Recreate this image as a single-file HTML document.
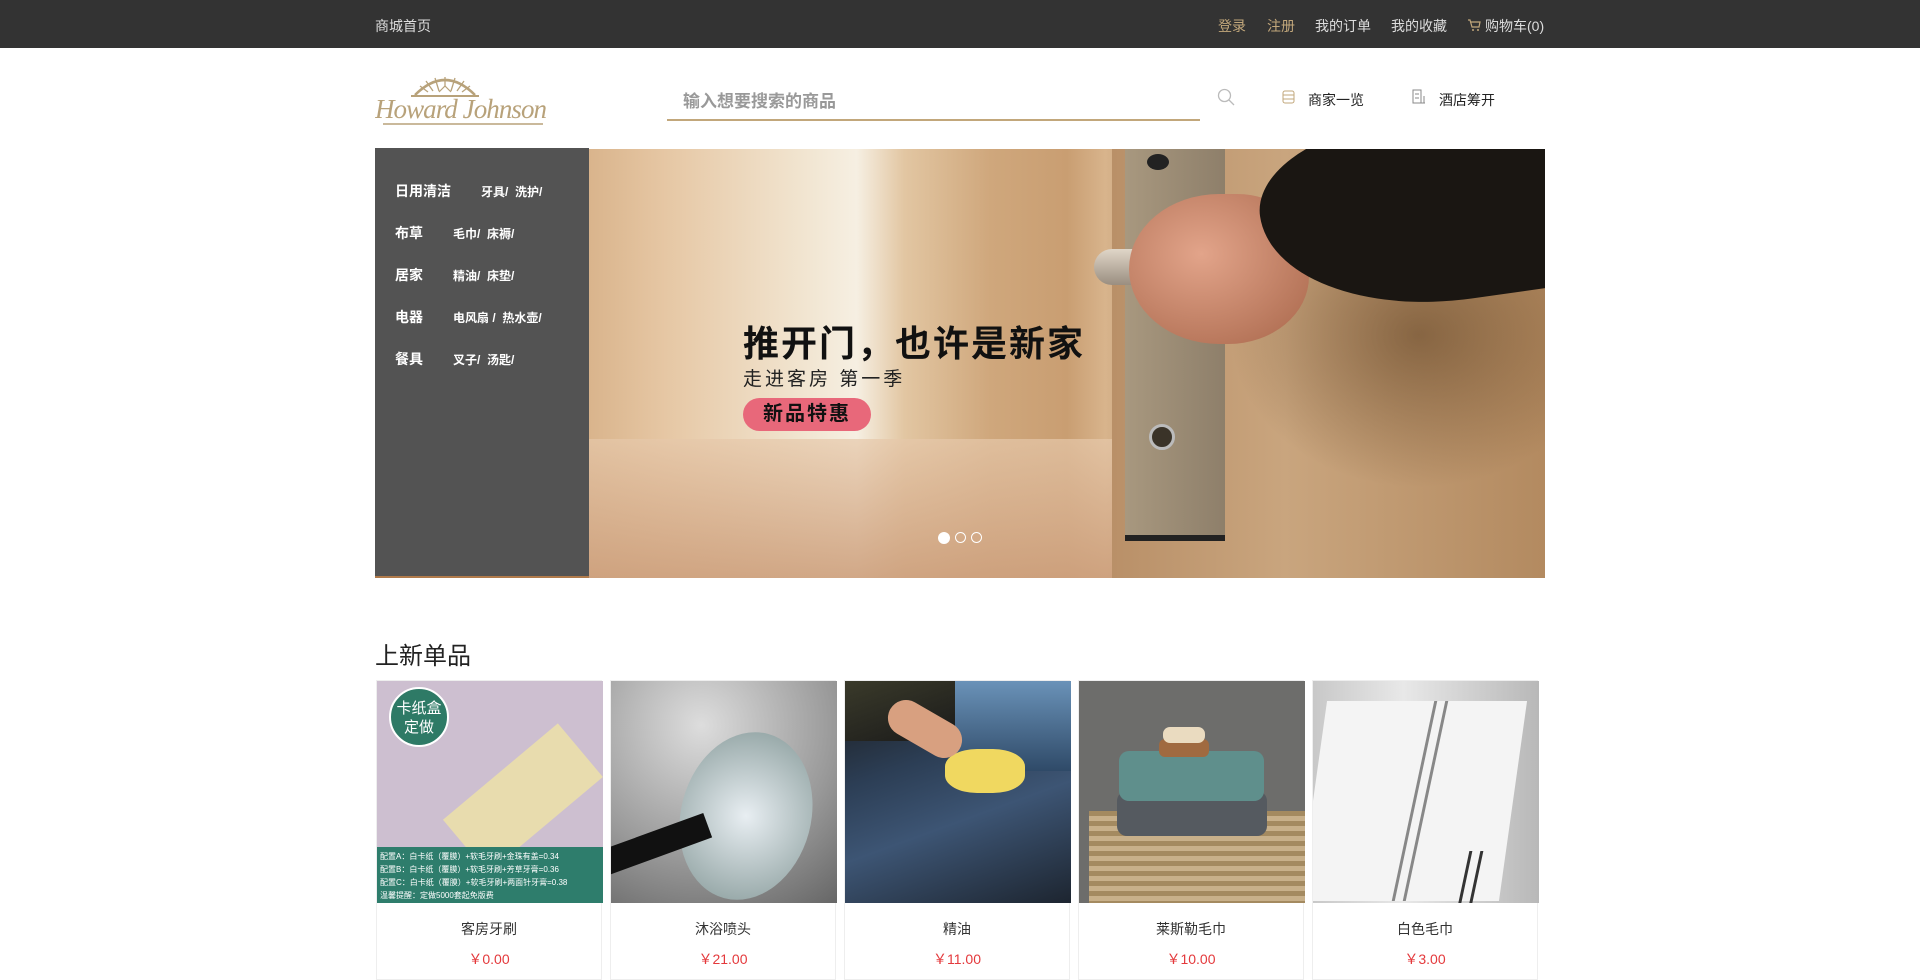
<!DOCTYPE html>
<html><head><meta charset="utf-8"><style>
*{margin:0;padding:0;box-sizing:border-box}
body{width:1920px;height:967px;overflow:hidden;background:#fff;font-family:"Liberation Sans","Noto Sans CJK SC",sans-serif;position:relative}
.abs{position:absolute}
.top{position:absolute;left:0;top:0;width:1920px;height:48px;background:#333}
.top span{position:absolute;top:17px;font-size:14px;color:#ddd;line-height:18px}
.gold{color:#c2a77b!important}
.side{position:absolute;left:375px;top:148px;width:214px;height:430px;background:#535353;border-bottom:2px solid #b07a4a}
.side .t{position:absolute;left:20px;font-size:14px;font-weight:bold;color:#fff}
.side .s{position:absolute;font-size:12px;font-weight:bold;color:#fff}
.card{position:absolute;top:680px;width:226px;height:300px;border:1px solid #eee;background:#fff}
.card .img{position:absolute;left:0;top:0;width:226px;height:222px;overflow:hidden}
.card .n{position:absolute;top:238px;width:100%;text-align:center;font-size:14px;color:#333}
.card .p{position:absolute;top:268px;width:100%;text-align:center;font-size:14px;color:#e4393c}
</style></head><body>
<div class="top">
<span style="left:375px">商城首页</span>
<span class="gold" style="left:1218px">登录</span>
<span class="gold" style="left:1267px">注册</span>
<span style="left:1315px">我的订单</span>
<span style="left:1391px">我的收藏</span>
<svg class="abs" style="left:1467px;top:18px" width="14" height="14" viewBox="0 0 14 14"><path d="M1 2h2l2 7h7l1-5H4" fill="none" stroke="#c2a77b" stroke-width="1.2"/><circle cx="6" cy="12" r="1" fill="#c2a77b"/><circle cx="11" cy="12" r="1" fill="#c2a77b"/></svg>
<span style="left:1485px">购物车(0)</span>
</div>
<svg class="abs" style="left:375px;top:71px" width="176" height="56" viewBox="0 0 176 56">
<path d="M40 24 Q70 -6 100 24" fill="none" stroke="#b8a27a" stroke-width="2.5"/>
<g stroke="#b8a27a" stroke-width="1.3">
<line x1="70" y1="20" x2="70" y2="6"/><line x1="64" y1="20" x2="60" y2="7"/><line x1="76" y1="20" x2="80" y2="7"/><line x1="58" y1="20" x2="51" y2="10"/><line x1="82" y1="20" x2="89" y2="10"/><line x1="53" y1="21" x2="45" y2="15"/><line x1="87" y1="21" x2="95" y2="15"/></g>
<path d="M64 21 L70 15 L76 21" fill="#fff" stroke="#b8a27a" stroke-width="1.2"/>
<line x1="36" y1="25" x2="104" y2="25" stroke="#b8a27a" stroke-width="2"/>
<text x="0" y="47" font-family="Liberation Serif,serif" font-style="italic" font-size="27" fill="#b8a27a" textLength="172">Howard Johnson</text>
<line x1="8" y1="53" x2="168" y2="53" stroke="#b8a27a" stroke-width="1.5"/>
</svg>
<div class="abs" style="left:667px;top:119px;width:533px;height:2px;background:#c2a77b"></div>
<div class="abs" style="left:683px;top:87px;font-size:17px;font-weight:bold;color:#999">输入想要搜索的商品</div>
<svg class="abs" style="left:1217px;top:88px" width="18" height="18" viewBox="0 0 18 18"><circle cx="7.5" cy="7.5" r="6" fill="none" stroke="#bbb" stroke-width="1.3"/><line x1="12" y1="12" x2="17" y2="17" stroke="#bbb" stroke-width="1.3"/></svg>
<svg class="abs" style="left:1282px;top:90px" width="13" height="14" viewBox="0 0 13 14"><rect x="1" y="1" width="11" height="12" rx="2" fill="none" stroke="#c2a77b"/><line x1="1" y1="5" x2="12" y2="5" stroke="#c2a77b"/><line x1="1" y1="9" x2="12" y2="9" stroke="#c2a77b"/></svg>
<div class="abs" style="left:1308px;top:90px;font-size:14px;color:#222">商家一览</div>
<svg class="abs" style="left:1412px;top:89px" width="14" height="15" viewBox="0 0 14 15"><rect x="1" y="1" width="8" height="13" fill="none" stroke="#888"/><line x1="9" y1="14" x2="13" y2="14" stroke="#888"/><line x1="12" y1="7" x2="12" y2="14" stroke="#888"/><line x1="3" y1="5" x2="7" y2="5" stroke="#888"/><line x1="3" y1="9" x2="7" y2="9" stroke="#888"/></svg>
<div class="abs" style="left:1439px;top:90px;font-size:14px;color:#222">酒店筹开</div>
<div class="abs" style="left:589px;top:149px;width:956px;height:429px;overflow:hidden;background:linear-gradient(90deg,#d9b48c 0%,#e6c7a4 8%,#f1e4cf 22%,#f6efe2 28%,#e2c6a2 33%,#cfa77c 42%,#c99e72 50%,#d8b48c 54%,#b99570 60%,#c4a07a 100%)">
<div class="abs" style="left:0;top:290px;width:540px;height:140px;background:linear-gradient(180deg,rgba(230,200,170,.7),rgba(205,160,125,.9))"></div>
<div class="abs" style="left:523px;top:0;width:433px;height:429px;background:linear-gradient(90deg,#b99068,#c9a57e 40%,#b38a60 100%)"></div>
<div class="abs" style="left:536px;top:0;width:100px;height:392px;background:linear-gradient(90deg,#a8987f,#8e7f6a);border-bottom:6px solid #222"></div>
<div class="abs" style="left:558px;top:5px;width:22px;height:16px;border-radius:50%;background:#222"></div>
<div class="abs" style="left:560px;top:275px;width:26px;height:26px;border-radius:50%;background:#3a3328;border:3px solid #bbb"></div>
<div class="abs" style="left:640px;top:120px;width:316px;height:220px;background:radial-gradient(ellipse at 60% 30%,rgba(90,60,30,.55),rgba(90,60,30,0) 70%)"></div>
<div class="abs" style="left:505px;top:100px;width:110px;height:36px;border-radius:18px;background:linear-gradient(180deg,#e0d6c8,#9a8e80)"></div>
<div class="abs" style="left:540px;top:45px;width:180px;height:150px;border-radius:50% 40% 45% 50%;background:radial-gradient(ellipse at 40% 40%,#e2a48a,#a8664a)"></div>
<div class="abs" style="left:672px;top:-30px;width:330px;height:185px;border-radius:40% 0 0 60%;background:#1a1612;transform:rotate(-8deg)"></div>
<div class="abs" style="left:154px;top:166px;font-size:36px;font-weight:bold;color:#111;letter-spacing:2px;white-space:nowrap">推开门，也许是新家</div>
<div class="abs" style="left:154px;top:215px;font-size:19px;color:#222;letter-spacing:3px">走进客房 第一季</div>
<div class="abs" style="left:154px;top:249px;width:128px;height:33px;border-radius:17px;background:#e8687a;font-size:20px;font-weight:bold;color:#111;text-align:center;line-height:33px;letter-spacing:2px">新品特惠</div>
<div class="abs" style="left:349px;top:383px;width:12px;height:12px;border-radius:50%;background:#fff"></div>
<div class="abs" style="left:366px;top:383px;width:11px;height:11px;border-radius:50%;border:1.5px solid #fff"></div>
<div class="abs" style="left:382px;top:383px;width:11px;height:11px;border-radius:50%;border:1.5px solid #fff"></div>
</div>
<div class="side">
<div class="t" style="top:33px">日用清洁</div><div class="s" style="left:106px;top:35px">牙具/ &nbsp;洗护/</div>
<div class="t" style="top:75px">布草</div><div class="s" style="left:78px;top:77px">毛巾/ &nbsp;床褥/</div>
<div class="t" style="top:117px">居家</div><div class="s" style="left:78px;top:119px">精油/ &nbsp;床垫/</div>
<div class="t" style="top:159px">电器</div><div class="s" style="left:78px;top:161px">电风扇 / &nbsp;热水壶/</div>
<div class="t" style="top:201px">餐具</div><div class="s" style="left:78px;top:203px">叉子/ &nbsp;汤匙/</div>
</div>
<div class="abs" style="left:375px;top:636px;font-size:24px;color:#222">上新单品</div>
<div class="card" style="left:376px"><div class="img" style="background:#cdbfd0">
<div class="abs" style="left:40px;top:30px;width:150px;height:70px;background:#e8dcae;transform:rotate(-40deg) translate(-10px,60px)"></div>
<div class="abs" style="left:12px;top:6px;width:60px;height:60px;border-radius:50%;background:#2e7a66;border:2px solid #fff;color:#fff;font-size:15px;text-align:center;line-height:19px;padding-top:10px">卡纸盒<br>定做</div>
<div class="abs" style="left:0;top:166px;width:226px;height:56px;background:#2e7d6c;color:#fff;font-size:8px;line-height:13px;padding:3px 3px;white-space:nowrap;overflow:hidden">配置A：白卡纸（覆膜）+软毛牙刷+金珠有盖=0.34<br>配置B：白卡纸（覆膜）+软毛牙刷+芳草牙膏=0.36<br>配置C：白卡纸（覆膜）+软毛牙刷+两面针牙膏=0.38<br>温馨提醒：定做5000套起免版费</div></div>
<div class="n">客房牙刷</div><div class="p">￥0.00</div></div>
<div class="card" style="left:610px"><div class="img" style="background:radial-gradient(circle at 40% 20%,#ddd,#999 60%,#666)">
<div class="abs" style="left:70px;top:50px;width:130px;height:170px;border-radius:50%;background:radial-gradient(circle,#e8eef2,#9aa 80%,#222);transform:rotate(15deg)"></div>
<div class="abs" style="left:-10px;top:150px;width:110px;height:26px;background:#111;transform:rotate(-20deg)"></div></div>
<div class="n">沐浴喷头</div><div class="p">￥21.00</div></div>
<div class="card" style="left:844px"><div class="img" style="background:linear-gradient(160deg,#1a1a1a 0%,#2c3e55 35%,#3d5574 60%,#1d2530 100%)">
<div class="abs" style="left:110px;top:0;width:120px;height:90px;background:linear-gradient(#6a92b8,#2f4a68)"></div>
<div class="abs" style="left:0;top:0;width:110px;height:60px;background:linear-gradient(160deg,#3a3a2a,#1a1a1a)"></div>
<div class="abs" style="left:100px;top:68px;width:80px;height:44px;border-radius:40%;background:#f0d860"></div>
<div class="abs" style="left:40px;top:30px;width:80px;height:36px;background:#d8a080;transform:rotate(30deg);border-radius:20px"></div></div>
<div class="n">精油</div><div class="p">￥11.00</div></div>
<div class="card" style="left:1078px"><div class="img" style="background:#6d6d6b">
<div class="abs" style="left:10px;top:130px;width:220px;height:95px;background:repeating-linear-gradient(0deg,#a48a60 0 5px,#c8b08a 5px 10px)"></div>
<div class="abs" style="left:38px;top:110px;width:150px;height:45px;border-radius:10px;background:#555a60"></div>
<div class="abs" style="left:40px;top:70px;width:145px;height:50px;border-radius:10px;background:#5f8f8c"></div>
<div class="abs" style="left:80px;top:58px;width:50px;height:18px;border-radius:6px;background:#a06a40"></div>
<div class="abs" style="left:84px;top:46px;width:42px;height:16px;border-radius:7px;background:#eadbc0"></div></div>
<div class="n">莱斯勒毛巾</div><div class="p">￥10.00</div></div>
<div class="card" style="left:1312px"><div class="img" style="background:linear-gradient(90deg,#c8c8c8,#e8e8e8 40%,#b8b8b8)">
<div class="abs" style="left:0;top:20px;width:200px;height:200px;background:#f4f4f4;transform:skewX(-8deg)"></div>
<div class="abs" style="left:100px;top:20px;width:14px;height:200px;border-left:3px solid #888;border-right:3px solid #888;transform:skewX(-12deg)"></div>
<div class="abs" style="left:150px;top:170px;width:14px;height:60px;border-left:3px solid #333;border-right:3px solid #333;transform:skewX(-12deg)"></div></div>
<div class="n">白色毛巾</div><div class="p">￥3.00</div></div>
</body></html>
